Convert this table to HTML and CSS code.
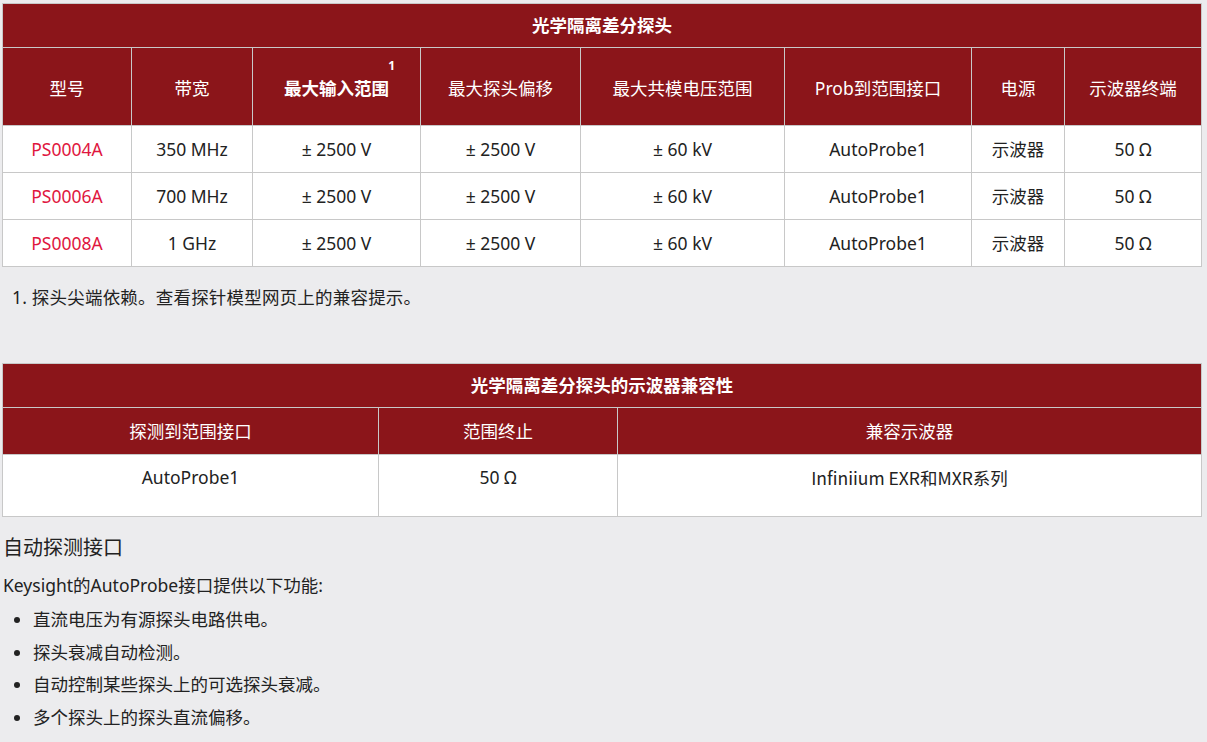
FILE: index.html
```html
<!DOCTYPE html>
<html lang="zh-CN">
<head>
   <meta charset="UTF-8">
   <meta name="viewport" content="width=device-width, initial-scale=1.0">
   <title>光学隔离差分探头</title>
   <link rel="stylesheet" href="styles.css">
</head>
<body>
   <table class="spec">
      <colgroup>
         <col style="width:129px">
         <col style="width:121px">
         <col style="width:168px">
         <col style="width:160px">
         <col style="width:204px">
         <col style="width:187px">
         <col style="width:93px">
         <col style="width:137px">
      </colgroup>
      <thead>
         <tr class="title"><th colspan="8">光学隔离差分探头</th></tr>
         <tr class="head">
            <th>型号</th>
            <th>带宽</th>
            <th><strong>最大输入范围<sup>1</sup></strong></th>
            <th>最大探头偏移</th>
            <th>最大共模电压范围</th>
            <th>Prob到范围接口</th>
            <th>电源</th>
            <th>示波器终端</th>
         </tr>
      </thead>
      <tbody>
         <tr>
            <td><a href="#">PS0004A</a></td>
            <td>350 MHz</td>
            <td>± 2500 V</td>
            <td>± 2500 V</td>
            <td>± 60 kV</td>
            <td>AutoProbe1</td>
            <td>示波器</td>
            <td>50 Ω</td>
         </tr>
         <tr>
            <td><a href="#">PS0006A</a></td>
            <td>700 MHz</td>
            <td>± 2500 V</td>
            <td>± 2500 V</td>
            <td>± 60 kV</td>
            <td>AutoProbe1</td>
            <td>示波器</td>
            <td>50 Ω</td>
         </tr>
         <tr>
            <td><a href="#">PS0008A</a></td>
            <td>1 GHz</td>
            <td>± 2500 V</td>
            <td>± 2500 V</td>
            <td>± 60 kV</td>
            <td>AutoProbe1</td>
            <td>示波器</td>
            <td>50 Ω</td>
         </tr>
      </tbody>
   </table>

   <p class="note">1. 探头尖端依赖。查看探针模型网页上的兼容提示。</p>

   <table class="spec compat">
      <colgroup>
         <col style="width:376px">
         <col style="width:239px">
         <col style="width:584px">
      </colgroup>
      <thead>
         <tr class="title"><th colspan="3">光学隔离差分探头的示波器兼容性</th></tr>
         <tr class="head">
            <th>探测到范围接口</th>
            <th>范围终止</th>
            <th>兼容示波器</th>
         </tr>
      </thead>
      <tbody>
         <tr>
            <td>AutoProbe1</td>
            <td>50 Ω</td>
            <td class="cjk">Infiniium EXR和MXR系列</td>
         </tr>
      </tbody>
   </table>

   <h3>自动探测接口</h3>
   <p class="intro">Keysight的AutoProbe接口提供以下功能:</p>
   <ul class="features">
      <li>直流电压为有源探头电路供电。</li>
      <li>探头衰减自动检测。</li>
      <li>自动控制某些探头上的可选探头衰减。</li>
      <li>多个探头上的探头直流偏移。</li>
   </ul>
</body>
</html>
```

FILE: styles.css
```css
*{
   margin: 0;
   padding: 0;
   box-sizing: border-box;
}

body{
   background-color: #ececee;
   color: #222;
   font-family: "Noto Sans", "Noto Sans CJK SC", sans-serif;
   font-size: 17.5px;
   line-height: 25px;
   padding: 3px 6px 0 2px;
}

.spec{
   width: 1199px;
   table-layout: fixed;
   border-collapse: collapse;
   background-color: #fff;
   border: 1px solid #c8c8c8;
}

.spec th, .spec td{
   border: 1px solid #c8c8c8;
   text-align: center;
   font-weight: normal;
}

.spec th{
   background-color: #8b151a;
   color: #fff;
}

.title th{
   height: 44px;
   font-weight: bold;
   font-size: 17.5px;
}

.head th{
   height: 78px;
   font-size: 17.5px;
   padding-top: 4px;
}

.head strong{
   position: relative;
}

.head sup{
   position: absolute;
   right: -6px;
   top: -16px;
   font-size: 12px;
   line-height: 1;
}

.spec td{
   height: 47px;
   font-size: 17.5px;
}

.spec td a{
   color: #e0163e;
   text-decoration: none;
}

.note{
   padding: 18px 10px 0 10px;
   height: 96px;
   letter-spacing: 0.2px;
}

.compat .head th{
   height: 47px;
   padding-top: 0;
}

.compat td{
   height: 62px;
   vertical-align: top;
   padding-top: 10px;
}

.cjk{
   font-family: "Noto Sans CJK SC", sans-serif;
}

h3{
   font-size: 20px;
   line-height: 27px;
   font-weight: normal;
   margin-top: 17px;
   margin-left: 1px;
}

.intro{
   margin-top: 12px;
   margin-left: 1px;
}

.features{
   margin-top: 5px;
   padding-left: 31px;
}

.features li{
   line-height: 32.5px;
}
```
